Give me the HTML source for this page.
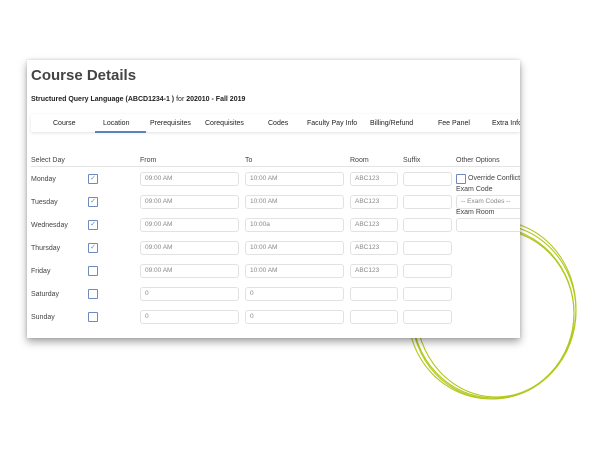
<!DOCTYPE html>
<html><head><style>
body{margin:0;width:600px;height:450px;background:#fff;position:relative;overflow:hidden;font-family:"Liberation Sans",sans-serif;color:#333}
svg.c{position:absolute;left:0;top:0}
.panel{position:absolute;left:27px;top:60px;width:493px;height:278px;background:#fff;box-shadow:0 4px 8px rgba(0,0,0,.35),0 0 3px rgba(0,0,0,.15);overflow:hidden}
.a{position:absolute;white-space:nowrap}
h1{position:absolute;left:4px;top:7px;margin:0;font-size:15px;font-weight:bold;color:#444}
.sub{left:4px;top:36px;font-size:7px;color:#222}
.tabs{position:absolute;left:4px;top:54px;width:489px;height:18px;box-shadow:0 1px 3px rgba(0,0,0,.12)}
.t{position:absolute;top:6px;font-size:7px;color:#222;white-space:nowrap}
.ul{position:absolute;left:64px;top:17px;width:51px;height:1.5px;background:#5b85b8}
.lbl{font-size:7px;color:#444}
.in{position:absolute;height:12px;border:1px solid #e2e2e2;border-radius:3px;font-size:6.5px;color:#888;line-height:12px;padding-left:4px;box-sizing:content-box;white-space:nowrap}
.cb{position:absolute;width:8px;height:8px;border:1px solid #6f8bbd;border-radius:1px;font-size:7px;line-height:8px;text-align:center;color:#6f8bbd}
</style></head><body>
<svg class="c" width="600" height="450">
<g fill="none" stroke="#b3c81f" stroke-width="1.1">
<ellipse cx="494" cy="311" rx="82" ry="87"/>
<ellipse cx="491" cy="313" rx="83" ry="86"/>
<ellipse cx="496" cy="309" rx="80" ry="88"/>
<ellipse cx="493" cy="314" rx="81" ry="85"/>
</g></svg>
<div class="panel">
<h1>Course Details</h1>
<div class="a sub"><b>Structured Query Language (ABCD1234-1 )</b> for <b>202010 - Fall 2019</b></div>
<div class="tabs">
<span class="t" style="left:22px">Course</span>
<span class="t" style="left:72px">Location</span>
<span class="t" style="left:119px">Prerequisites</span>
<span class="t" style="left:174px">Corequisites</span>
<span class="t" style="left:237px">Codes</span>
<span class="t" style="left:276px">Faculty Pay Info</span>
<span class="t" style="left:339px">Billing/Refund</span>
<span class="t" style="left:407px">Fee Panel</span>
<span class="t" style="left:461px">Extra Info</span>
<div class="ul"></div>
</div>
<div class="a lbl" style="left:4px;top:97px">Select Day</div>
<div class="a lbl" style="left:113px;top:97px">From</div>
<div class="a lbl" style="left:218px;top:97px">To</div>
<div class="a lbl" style="left:323px;top:97px">Room</div>
<div class="a lbl" style="left:376px;top:97px">Suffix</div>
<div class="a lbl" style="left:429px;top:97px">Other Options</div>
<div style="position:absolute;left:4px;top:106px;width:489px;height:1px;background:#e4e4e4"></div>

<div class="a lbl" style="left:4px;top:116px">Monday</div><div class="cb" style="left:61px;top:114px">✓</div>
<div class="in" style="left:113px;top:112px;width:93px">09:00 AM</div><div class="in" style="left:218px;top:112px;width:93px">10:00 AM</div><div class="in" style="left:323px;top:112px;width:42px">ABC123</div><div class="in" style="left:376px;top:112px;width:43px"></div>

<div class="a lbl" style="left:4px;top:139px">Tuesday</div><div class="cb" style="left:61px;top:137px">✓</div>
<div class="in" style="left:113px;top:135px;width:93px">09:00 AM</div><div class="in" style="left:218px;top:135px;width:93px">10:00 AM</div><div class="in" style="left:323px;top:135px;width:42px">ABC123</div><div class="in" style="left:376px;top:135px;width:43px"></div>

<div class="a lbl" style="left:4px;top:162px">Wednesday</div><div class="cb" style="left:61px;top:160px">✓</div>
<div class="in" style="left:113px;top:158px;width:93px">09:00 AM</div><div class="in" style="left:218px;top:158px;width:93px">10:00a</div><div class="in" style="left:323px;top:158px;width:42px">ABC123</div><div class="in" style="left:376px;top:158px;width:43px"></div>

<div class="a lbl" style="left:4px;top:185px">Thursday</div><div class="cb" style="left:61px;top:183px">✓</div>
<div class="in" style="left:113px;top:181px;width:93px">09:00 AM</div><div class="in" style="left:218px;top:181px;width:93px">10:00 AM</div><div class="in" style="left:323px;top:181px;width:42px">ABC123</div><div class="in" style="left:376px;top:181px;width:43px"></div>

<div class="a lbl" style="left:4px;top:208px">Friday</div><div class="cb" style="left:61px;top:206px"></div>
<div class="in" style="left:113px;top:204px;width:93px">09:00 AM</div><div class="in" style="left:218px;top:204px;width:93px">10:00 AM</div><div class="in" style="left:323px;top:204px;width:42px">ABC123</div><div class="in" style="left:376px;top:204px;width:43px"></div>

<div class="a lbl" style="left:4px;top:231px">Saturday</div><div class="cb" style="left:61px;top:229px"></div>
<div class="in" style="left:113px;top:227px;width:93px">0</div><div class="in" style="left:218px;top:227px;width:93px">0</div><div class="in" style="left:323px;top:227px;width:42px"></div><div class="in" style="left:376px;top:227px;width:43px"></div>

<div class="a lbl" style="left:4px;top:254px">Sunday</div><div class="cb" style="left:61px;top:252px"></div>
<div class="in" style="left:113px;top:250px;width:93px">0</div><div class="in" style="left:218px;top:250px;width:93px">0</div><div class="in" style="left:323px;top:250px;width:42px"></div><div class="in" style="left:376px;top:250px;width:43px"></div>

<div class="cb" style="left:429px;top:114px"></div><div class="a lbl" style="left:441px;top:115px">Override Conflicts</div>
<div class="a lbl" style="left:429px;top:126px">Exam Code</div>
<div class="in" style="left:429px;top:135px;width:70px">-- Exam Codes --</div>
<div class="a lbl" style="left:429px;top:149px">Exam Room</div>
<div class="in" style="left:429px;top:158px;width:70px"></div>
</div>
</body></html>
